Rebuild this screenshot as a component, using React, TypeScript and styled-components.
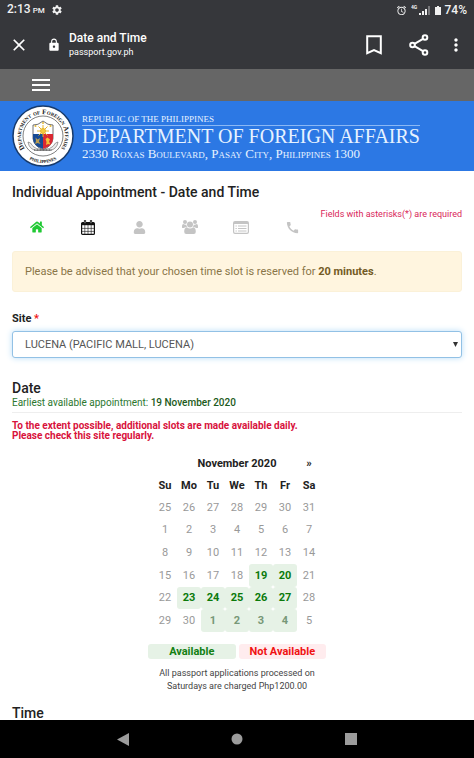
import React from "react";
import styled, { createGlobalStyle, css } from "styled-components";
import { FaHome, FaUser } from "react-icons/fa";
import { MdCall, MdSettings, MdLock, MdClose, MdAlarm, MdMoreVert } from "react-icons/md";

const GlobalStyle = createGlobalStyle`
  *, *::before, *::after { box-sizing: border-box; }
  body { margin: 0; background: #fff; color: #222; font-family: Roboto, "Liberation Sans", sans-serif; font-size: 12px; }
  h1, h2, p { margin: 0; font-weight: 500; }
  button { font: inherit; color: inherit; background: none; border: 0; padding: 0; cursor: pointer; }
  svg { display: block; flex: none; }
`;

const Screen = styled.div`
  display: flex;
  flex-direction: column;
  height: 100vh;
  overflow: hidden;
`;

const StatusBar = styled.div`
  display: flex;
  align-items: center;
  justify-content: space-between;
  height: 20px;
  padding: 0 7px;
  background: #36373b;
  color: #f1f1f1;
  font-weight: 500;
  line-height: 20px;
`;

const StatusGroup = styled.div<{ $gap: number }>`
  display: flex;
  align-items: center;
  gap: ${(p) => p.$gap}px;
`;

const Meridiem = styled.span`
  margin-left: 2px;
  font-size: 8px;
`;

const Toolbar = styled.header`
  display: flex;
  align-items: center;
  height: 49px;
  padding: 0 7px 0 10px;
  background: #36373b;
  color: #fff;
`;

const IconButton = styled.button<{ $width: number }>`
  display: flex;
  align-items: center;
  justify-content: center;
  width: ${(p) => p.$width}px;
  height: 32px;
`;

const PageInfo = styled.div`
  display: flex;
  flex: 1;
  align-items: center;
  gap: 8px;
  padding-left: 19px;
`;

const PageTitle = styled.div`
  font-size: 12px;
  font-weight: 500;
  line-height: 15px;
`;

const PageHost = styled.div`
  font-size: 9px;
  line-height: 12px;
`;

const SiteNav = styled.nav`
  display: flex;
  align-items: center;
  height: 32px;
  padding-left: 31px;
  background: #666;
`;

const Banner = styled.div`
  display: flex;
  align-items: center;
  gap: 8px;
  height: 70px;
  padding-left: 12px;
  background: #2c78e4;
  color: #e6f2ff;
  font-family: "Liberation Serif", serif;
  white-space: nowrap;
`;

const BannerText = styled.div`
  padding-top: 3px;
`;

const Republic = styled.div`
  width: fit-content;
  font-size: 9px;
  line-height: 11px;
`;

const Department = styled.div`
  border-top: 1px solid #8bb8f5;
  font-size: 20px;
  line-height: 21px;
`;

const Address = styled.div`
  font-size: 13px;
  font-variant: small-caps;
  line-height: 14px;
`;

const Main = styled.main`
  flex: 1;
  min-height: 0;
  overflow: hidden;
  padding: 12px 12px 0;
`;

const Heading = styled.h1`
  font-size: 14px;
  line-height: 18px;
`;

const StepRow = styled.div`
  display: flex;
  justify-content: space-between;
  align-items: flex-start;
  margin-top: 7px;
  height: 43px;
`;

const Steps = styled.ol`
  display: flex;
  gap: 31px;
  list-style: none;
  margin: 9px 0 0;
  padding: 0 0 0 15px;
`;

const Step = styled.li<{ $color: string }>`
  display: flex;
  align-items: center;
  justify-content: center;
  width: 20px;
  height: 20px;
  color: ${(p) => p.$color};
`;

const RequiredNote = styled.div`
  color: #d9265a;
  font-size: 9px;
  line-height: 12px;
  white-space: nowrap;
`;

const Alert = styled.div`
  padding: 10px 12px;
  border: 1px solid #fbf1d8;
  border-radius: 3px;
  background: #fff5df;
  color: #8a7548;
  font-size: 11px;
  line-height: 19px;
  b { color: #735b25; }
`;

const Label = styled.label`
  display: block;
  margin-top: 20px;
  font-size: 11px;
  font-weight: 700;
  line-height: 14px;
`;

const Star = styled.span`
  color: #f01212;
`;

const SelectBox = styled.div`
  position: relative;
  margin-top: 5px;
  svg {
    position: absolute;
    right: 4px;
    top: 11px;
    pointer-events: none;
  }
`;

const Select = styled.select`
  appearance: none;
  display: block;
  width: 100%;
  height: 27px;
  padding: 0 12px;
  border: 1px solid #92c1e5;
  border-radius: 3px;
  outline: 0;
  background: #fff;
  color: #555;
  font-family: inherit;
  font-size: 11px;
  box-shadow: 0 0 6px #b9ddf7;
`;

const SectionTitle = styled.h2<{ $top: number }>`
  margin-top: ${(p) => p.$top}px;
  font-size: 14px;
  line-height: 16px;
`;

const Earliest = styled.p`
  padding-bottom: 2px;
  border-bottom: 1px solid #eee;
  color: #2c772f;
  font-size: 10px;
  font-weight: 400;
  line-height: 14px;
  b { color: #1c5a20; font-weight: 500; }
`;

const Warning = styled.p`
  margin-top: 8px;
  color: #d8123c;
  font-size: 10px;
  font-weight: 700;
  line-height: 10px;
`;

const CalendarPanel = styled.div`
  width: 178px;
  margin: 11px auto 0;
`;

const Calendar = styled.table`
  width: 168px;
  height: 180px;
  margin: 0 auto;
  border-collapse: collapse;
  table-layout: fixed;
  text-align: center;
  font-size: 11px;
  tr { height: 22px; }
  th { padding: 0; font-weight: 700; }
`;

const Day = styled.td<{ $kind: "off" | "open" | "next" }>`
  padding: 0;
  color: #999;
  ${(p) =>
    p.$kind !== "off" &&
    css`
      border-radius: 3px;
      background: #e6f2e6;
      color: ${p.$kind === "open" ? "#0b7a0b" : "#779877"};
      font-weight: 700;
    `}
`;

const Legend = styled.div`
  display: grid;
  grid-template-columns: 1fr 1fr;
  gap: 3px;
  margin-top: 12px;
`;

const LegendItem = styled.div<{ $open?: boolean }>`
  border-radius: 3px;
  background: ${(p) => (p.$open ? "#e6f2e6" : "#ffecee")};
  color: ${(p) => (p.$open ? "#128012" : "#f01212")};
  font-size: 11px;
  font-weight: 700;
  line-height: 15px;
  text-align: center;
`;

const FeeNote = styled.p`
  margin-top: 8px;
  color: #444;
  font-size: 9px;
  font-weight: 400;
  line-height: 13px;
  text-align: center;
`;

const SystemNav = styled.nav`
  display: flex;
  align-items: center;
  justify-content: center;
  gap: 76px;
  height: 38px;
  background: #000;
  color: #9c9c9c;
`;

const Seal = () => (
  <svg width="62" height="62" viewBox="0 0 124 124" role="img" aria-label="Department of Foreign Affairs seal">
    <defs>
      <path id="sealTop" d="M33.700 95.700A44 44 0 1 1 90.300 95.700" />
      <path id="sealBottom" d="M15.200 89A54 54 0 0 0 108.800 89" />
    </defs>
    <circle cx="62" cy="62" r="60" fill="#fff" stroke="#173a6b" strokeWidth="3" />
    <circle cx="62" cy="62" r="40" fill="#fff" stroke="#555" strokeWidth="1.5" />
    <g fill="#222" fontFamily="Liberation Serif, serif" fontWeight="700">
      <text fontSize="14" fontVariant="small-caps"><textPath href="#sealTop" startOffset="50%" textAnchor="middle">Department of Foreign Affairs</textPath></text>
      <text fontSize="9"><textPath href="#sealBottom" startOffset="50%" textAnchor="middle">PHILIPPINES</textPath></text>
    </g>
    <path d="M42 40q10 1 20-8q10 9 20 8v27q-2 16-20 22q-18-6-20-22z" fill="#fff" stroke="#444" strokeWidth="1.5" />
    <path d="M42 58h20v30q-19-5-20-20z" fill="#174a94" />
    <path d="M62 58h20v10q-1 15-20 20z" fill="#d92832" />
    <g stroke="#e7b62d" strokeWidth="2">
      <path d="M62 40v24M50 52h24M53 43l18 18M71 43L53 61" />
      <circle cx="62" cy="52" r="5" fill="#f4c93e" />
    </g>
    <path d="M47 65l4 4 5-3-2 7 3 5-6-2-5 2 2-6z" fill="#b79b52" />
    <path d="M67 68l4-3 5 4-2 4 3 6-5-1-4 2 1-6z" fill="#f5bd35" />
    <path d="M32 74q2 14 16 17h28q14-3 16-17l-5 2q-4 8-12 11-13 5-26 0-8-3-12-11z" fill="#eee" stroke="#666" strokeWidth="1.2" />
    <path d="M44 90h36" stroke="#666" strokeWidth="3" strokeDasharray="2 1" />
    <g fill="#e3b733"><circle cx="47" cy="42" r="2" /><circle cx="77" cy="42" r="2" /><circle cx="62" cy="36" r="2" /></g>
  </svg>
);

const BookmarkIcon = () => (
  <svg width="16" height="20" viewBox="0 0 16 20" fill="none" stroke="currentColor" strokeWidth="2">
    <path d="M1.200 1.200h13.600v17L8 15.200l-6.800 3z" />
  </svg>
);

const ShareIcon = () => (
  <svg width="20" height="22" viewBox="0 0 20 22" fill="none" stroke="currentColor" strokeWidth="2">
    <circle cx="16" cy="3.500" r="2.300" /><circle cx="3.500" cy="11" r="2.300" /><circle cx="16" cy="18.500" r="2.300" />
    <path d="M5.500 9.800l8.500-5M5.500 12.200l8.500 5" />
  </svg>
);

const SignalIcon = () => (
  <svg width="20" height="12" viewBox="0 0 20 12" fill="currentColor">
    <text x="0" y="5" fontSize="5" fontWeight="700">4G</text>
    <path d="M8 9h2v2H8zM11 7h2v4h-2zM14 5h2v6h-2z" />
    <path d="M17 2h2v9h-2z" opacity=".35" />
  </svg>
);

const BatteryIcon = () => (
  <svg width="6" height="10" viewBox="0 0 6 10" fill="currentColor"><path d="M2 1h2v1h2v8H0V2h2z" /></svg>
);

const CalendarIcon = () => (
  <svg width="14" height="15" viewBox="0 0 14 15" fill="none" stroke="currentColor">
    <rect x=".6" y="2.6" width="12.8" height="11.8" rx="1" strokeWidth="1.2" />
    <path d="M1 4h12" strokeWidth="2.4" />
    <path d="M3.8 5v9M7 5v9M10.2 5v9M1 8.4h12M1 11.4h12" strokeWidth=".6" />
    <path d="M4 .3v3.4M10 .3v3.4" strokeWidth="2.2" />
    <path d="M4 1.2v2M10 1.2v2" stroke="#fff" strokeWidth=".6" />
  </svg>
);

const GroupIcon = () => (
  <svg width="16" height="14" viewBox="0 0 16 14" fill="currentColor">
    <circle cx="3" cy="2" r="2" /><circle cx="13" cy="2" r="2" /><circle cx="8" cy="4.5" r="3" />
    <path d="M0 7.5V6q0-2 1.5-2Q3 5 4.300 4.400q0 1.800 1 2.800H3.500q-1 0-1.500.8H1.200Q0 8 0 7.500zM16 7.500V6q0-2-1.500-2Q13 5 11.700 4.400q0 1.800-1 2.800h1.800q1 0 1.500.8h.8Q16 8 16 7.500zM5 7.600q3 1.800 6 0 2.800 0 2.800 4.200 0 2.200-2 2.200H4.200q-2 0-2-2.200 0-4.200 2.800-4.200z" />
  </svg>
);

const ListIcon = () => (
  <svg width="16" height="13" viewBox="0 0 16 13" fill="none" stroke="currentColor">
    <rect x=".6" y=".6" width="14.800" height="11.800" rx="1.400" strokeWidth="1.200" />
    <path d="M1 2h14" strokeWidth="2" />
    <path d="M2.500 5h1.300M5 5h8.500M2.500 7.500h1.300M5 7.500h8.500M2.500 10h1.300M5 10h8.500" />
  </svg>
);

const steps = [
  { name: "Home", color: "#20c934", icon: <FaHome size={14} /> },
  { name: "Date and time", color: "#111", icon: <CalendarIcon /> },
  { name: "Applicant", color: "#c4c4c4", icon: <FaUser size={13} /> },
  { name: "Family", color: "#c4c4c4", icon: <GroupIcon /> },
  { name: "Application", color: "#c4c4c4", icon: <ListIcon /> },
  { name: "Contact", color: "#c4c4c4", icon: <MdCall size={15} /> },
];

const weekdays = ["Su", "Mo", "Tu", "We", "Th", "Fr", "Sa"];
const weeks = [
  [25, 26, 27, 28, 29, 30, 31],
  [1, 2, 3, 4, 5, 6, 7],
  [8, 9, 10, 11, 12, 13, 14],
  [15, 16, 17, 18, 19, 20, 21],
  [22, 23, 24, 25, 26, 27, 28],
  [29, 30, 1, 2, 3, 4, 5],
];

function dayKind(week: number, col: number): "off" | "open" | "next" {
  if (week === 3 && (col === 4 || col === 5)) return "open";
  if (week === 4 && col >= 1 && col <= 5) return "open";
  if (week === 5 && col >= 2 && col <= 5) return "next";
  return "off";
}

export default function App() {
  return (
    <Screen>
      <GlobalStyle />
      <StatusBar>
        <StatusGroup $gap={6}>
          <span>2:13<Meridiem>PM</Meridiem></span>
          <MdSettings size={12} />
        </StatusGroup>
        <StatusGroup $gap={4}>
          <MdAlarm size={11} />
          <SignalIcon />
          <BatteryIcon />
          <span>74%</span>
        </StatusGroup>
      </StatusBar>
      <Toolbar>
        <IconButton $width={18} aria-label="Close"><MdClose size={20} /></IconButton>
        <PageInfo>
          <MdLock size={14} />
          <div>
            <PageTitle>Date and Time</PageTitle>
            <PageHost>passport.gov.ph</PageHost>
          </div>
        </PageInfo>
        <IconButton $width={36} aria-label="Bookmark"><BookmarkIcon /></IconButton>
        <IconButton $width={53} aria-label="Share"><ShareIcon /></IconButton>
        <IconButton $width={22} aria-label="More"><MdMoreVert size={20} /></IconButton>
      </Toolbar>
      <SiteNav>
        <IconButton $width={20} aria-label="Menu">
          <svg width="18" height="12" viewBox="0 0 18 12" fill="#fff"><path d="M0 0h18v2H0zM0 5h18v2H0zM0 10h18v2H0z" /></svg>
        </IconButton>
      </SiteNav>
      <Banner>
        <Seal />
        <BannerText>
          <Republic>REPUBLIC OF THE PHILIPPINES</Republic>
          <Department>DEPARTMENT OF FOREIGN AFFAIRS</Department>
          <Address>2330 Roxas Boulevard, Pasay City, Philippines 1300</Address>
        </BannerText>
      </Banner>
      <Main>
        <Heading>Individual Appointment - Date and Time</Heading>
        <StepRow>
          <Steps>
            {steps.map((s) => <Step key={s.name} $color={s.color} aria-label={s.name}>{s.icon}</Step>)}
          </Steps>
          <RequiredNote>Fields with asterisks(*) are required</RequiredNote>
        </StepRow>
        <Alert>Please be advised that your chosen time slot is reserved for <b>20 minutes</b>.</Alert>
        <Label htmlFor="site">Site <Star>*</Star></Label>
        <SelectBox>
          <Select id="site" defaultValue="lucena">
            <option value="lucena">LUCENA (PACIFIC MALL, LUCENA)</option>
          </Select>
          <svg width="5" height="5" viewBox="0 0 5 5"><path d="M0 0h5L2.500 5z" fill="#333" /></svg>
        </SelectBox>
        <SectionTitle $top={22}>Date</SectionTitle>
        <Earliest>Earliest available appointment: <b>19 November 2020</b></Earliest>
        <Warning>To the extent possible, additional slots are made available daily.<br />Please check this site regularly.</Warning>
        <CalendarPanel>
          <Calendar>
            <thead>
              <tr>
                <td />
                <th colSpan={5}>November 2020</th>
                <th><button aria-label="Next month">»</button></th>
              </tr>
              <tr>{weekdays.map((d) => <th key={d}>{d}</th>)}</tr>
            </thead>
            <tbody>
              {weeks.map((week, w) => (
                <tr key={w}>{week.map((d, c) => <Day key={c} $kind={dayKind(w, c)}>{d}</Day>)}</tr>
              ))}
            </tbody>
          </Calendar>
          <Legend>
            <LegendItem $open>Available</LegendItem>
            <LegendItem>Not Available</LegendItem>
          </Legend>
          <FeeNote>All passport applications processed on<br />Saturdays are charged Php1200.00</FeeNote>
        </CalendarPanel>
        <SectionTitle $top={12}>Time</SectionTitle>
      </Main>
      <SystemNav>
        <IconButton $width={38} aria-label="Back"><svg width="12" height="13" viewBox="0 0 12 13" fill="currentColor"><path d="M12 0v13L0 6.500z" /></svg></IconButton>
        <IconButton $width={38} aria-label="Home"><svg width="12" height="12" viewBox="0 0 12 12" fill="currentColor"><circle cx="6" cy="6" r="5.500" /></svg></IconButton>
        <IconButton $width={38} aria-label="Recent apps"><svg width="12" height="12" viewBox="0 0 12 12" fill="currentColor"><path d="M0 0h12v12H0z" /></svg></IconButton>
      </SystemNav>
    </Screen>
  );
}
